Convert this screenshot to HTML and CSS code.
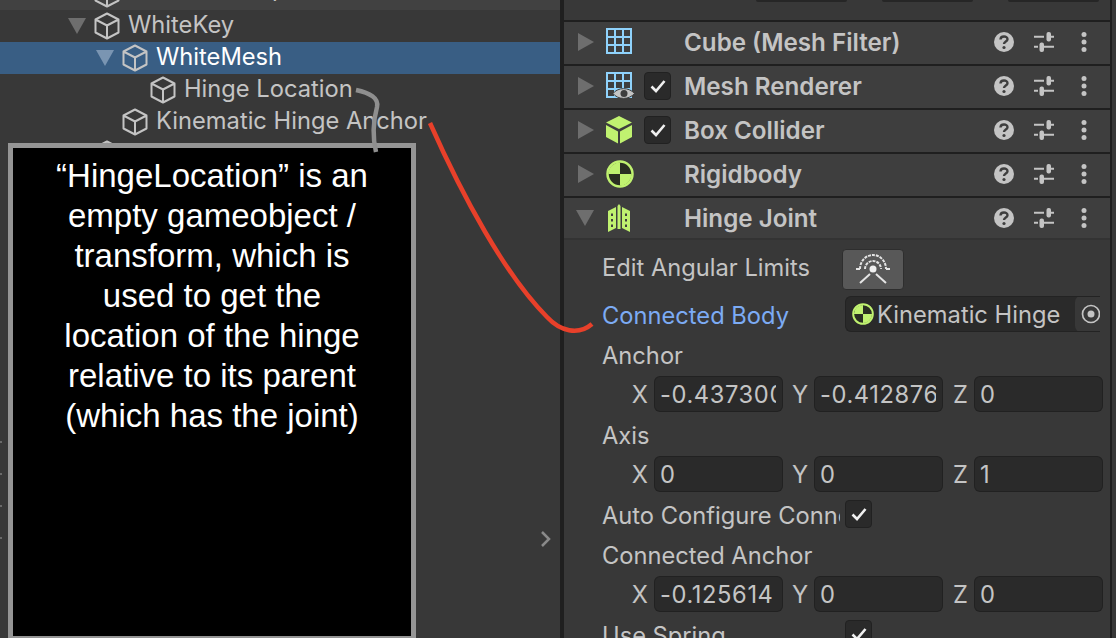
FILE: index.html
```html
<!DOCTYPE html>
<html lang="en">
  <head>
    <meta charset="UTF-8" />
    <title>Hinge Joint Inspector</title>
    <link rel="stylesheet" href="styles.css">
  </head>
  <body>
    <svg class="defs" width="0" height="0">
      <symbol id="cube" viewBox="0 0 26 28">
        <path d="M13 1.500 24.500 7.500V20.500L13 26.500 1.500 20.500V7.500ZM1.500 7.500 13 13.500 24.500 7.500M13 13.500V26.500" fill="none" stroke="currentColor" stroke-width="2" stroke-linejoin="round" />
      </symbol>
      <symbol id="grid" viewBox="0 0 26 26">
        <path d="M1 1H25V25H1ZM9 1V25M17 1V25M1 9H25M1 17H25" fill="none" stroke="#8fd2fb" stroke-width="2" />
      </symbol>
      <symbol id="help" viewBox="0 0 20 20">
        <circle cx="10" cy="10" r="10" fill="#c4c4c4" />
        <path d="M6.500 7.500C6.500 3.500 13.500 3.500 13.500 7.200 13.500 9.500 10 9.500 10 12" fill="none" stroke="#3e3e3e" stroke-width="2.400" />
        <circle cx="10" cy="15.500" r="1.600" fill="#3e3e3e" />
      </symbol>
      <symbol id="sliders" viewBox="0 0 20 20">
        <path d="M0 4.700H10M16 4.700H20M0 14.700H4M10 14.700H20" stroke="#c4c4c4" stroke-width="2" />
        <rect x="12.500" y="0" width="4.500" height="9.500" rx="2" fill="#c4c4c4" />
        <rect x="5.500" y="10.500" width="4.500" height="9.500" rx="2" fill="#c4c4c4" />
      </symbol>
      <symbol id="dots" viewBox="0 0 6 20">
        <circle cx="3" cy="2.500" r="2.500" fill="#c4c4c4" />
        <circle cx="3" cy="10" r="2.500" fill="#c4c4c4" />
        <circle cx="3" cy="17.500" r="2.500" fill="#c4c4c4" />
      </symbol>
      <symbol id="check" viewBox="0 0 16 14">
        <path d="M1.500 7.500 6 12 14.500 2" fill="none" stroke="#f0f0f0" stroke-width="2.600" />
      </symbol>
      <symbol id="rigidbody" viewBox="0 0 28 28">
        <circle cx="14" cy="14" r="12.500" fill="#2a2f22" stroke="#c0f270" stroke-width="2.500" />
        <path d="M14 2.500V14H2.500A11.500 11.500 0 0 1 14 2.500ZM14 14H25.500A11.500 11.500 0 0 1 14 25.500Z" fill="#c0f270" />
      </symbol>
      <symbol id="tri-right" viewBox="0 0 16 18">
        <path d="M0 0 16 9 0 18Z" fill="#6e6e6e" />
      </symbol>
      <symbol id="tri-down" viewBox="0 0 18 16">
        <path d="M0 0H18L9 16Z" fill="currentColor" />
      </symbol>
    </svg>

    <div class="app">
      <section class="hierarchy">
        <div class="row row-cut depth-1">
          <span class="arrow-slot"></span>
          <svg class="cube"><use href="#cube" /></svg>
          <span class="row-name">PinNer (Bass)</span>
        </div>
        <div class="row depth-1">
          <svg class="arrow-slot tri"><use href="#tri-down" /></svg>
          <svg class="cube"><use href="#cube" /></svg>
          <span class="row-name">WhiteKey</span>
        </div>
        <div class="row row-selected depth-2">
          <svg class="arrow-slot tri"><use href="#tri-down" /></svg>
          <svg class="cube"><use href="#cube" /></svg>
          <span class="row-name">WhiteMesh</span>
        </div>
        <div class="row depth-3">
          <span class="arrow-slot"></span>
          <svg class="cube"><use href="#cube" /></svg>
          <span class="row-name">Hinge Location</span>
        </div>
        <div class="row depth-2">
          <span class="arrow-slot"></span>
          <svg class="cube"><use href="#cube" /></svg>
          <span class="row-name">Kinematic Hinge Anchor</span>
        </div>
        <div class="row depth-1">
          <span class="arrow-slot"></span>
          <svg class="cube"><use href="#cube" /></svg>
        </div>
        <svg class="collapse" width="12" height="18" viewBox="0 0 12 18">
          <path d="M2 2 9 9 2 16" fill="none" stroke="#8a8a8a" stroke-width="2.500" />
        </svg>
        <div class="edge-ticks">
          <span class="edge-tick"></span>
          <span class="edge-tick"></span>
          <span class="edge-tick"></span>
          <span class="edge-tick"></span>
        </div>
      </section>

      <section class="inspector">
        <div class="top-fields">
          <span class="top-field"></span>
          <span class="top-field"></span>
          <span class="top-field"></span>
        </div>

        <div class="comp">
          <svg class="comp-arrow"><use href="#tri-right" /></svg>
          <svg class="comp-icon"><use href="#grid" width="26" height="26" /></svg>
          <span class="comp-toggle"></span>
          <span class="comp-title">Cube (Mesh Filter)</span>
          <svg class="tool-help"><use href="#help" /></svg>
          <svg class="tool-sliders"><use href="#sliders" /></svg>
          <svg class="tool-dots"><use href="#dots" /></svg>
        </div>
        <div class="comp">
          <svg class="comp-arrow"><use href="#tri-right" /></svg>
          <svg class="comp-icon" viewBox="0 0 26 28">
            <use href="#grid" width="26" height="26" />
            <path d="M7 21.500C12 15 23 15 28.500 21.500 23 28 12 28 7 21.500Z" fill="#c4c4c4" stroke="#3e3e3e" stroke-width="1" />
            <circle cx="18" cy="21.500" r="3.500" fill="#3e3e3e" />
          </svg>
          <span class="comp-toggle"><span class="checkbox"><svg class="check"><use href="#check" /></svg></span></span>
          <span class="comp-title">Mesh Renderer</span>
          <svg class="tool-help"><use href="#help" /></svg>
          <svg class="tool-sliders"><use href="#sliders" /></svg>
          <svg class="tool-dots"><use href="#dots" /></svg>
        </div>
        <div class="comp">
          <svg class="comp-arrow"><use href="#tri-right" /></svg>
          <svg class="comp-icon" viewBox="0 0 26 28">
            <path d="M13 0 26 6.500 13 13 0 6.500Z M0 9V21L12 27.500V15.500Z M26 9V21L14 27.500V15.500Z" fill="#c0f270" />
          </svg>
          <span class="comp-toggle"><span class="checkbox"><svg class="check"><use href="#check" /></svg></span></span>
          <span class="comp-title">Box Collider</span>
          <svg class="tool-help"><use href="#help" /></svg>
          <svg class="tool-sliders"><use href="#sliders" /></svg>
          <svg class="tool-dots"><use href="#dots" /></svg>
        </div>
        <div class="comp">
          <svg class="comp-arrow"><use href="#tri-right" /></svg>
          <svg class="comp-icon"><use href="#rigidbody" width="28" height="28" /></svg>
          <span class="comp-toggle"></span>
          <span class="comp-title">Rigidbody</span>
          <svg class="tool-help"><use href="#help" /></svg>
          <svg class="tool-sliders"><use href="#sliders" /></svg>
          <svg class="tool-dots"><use href="#dots" /></svg>
        </div>
        <div class="comp comp-open">
          <svg class="comp-arrow-down"><use href="#tri-down" /></svg>
          <svg class="comp-icon" viewBox="0 0 26 28">
            <path fill-rule="evenodd" d="M2 7 10 3V24L2 28ZM5 9.500V12H7V9.500ZM5 15V17.500H7V15ZM5 20.500V23H7V20.500Z" fill="#c0f270" />
            <path d="M11.500 2 13 0 14.500 2V25H11.500Z" fill="#c0f270" />
            <path fill-rule="evenodd" d="M24 7 16 3V24L24 28ZM19 9.500V12H21V9.500ZM19 15V17.500H21V15ZM19 20.500V23H21V20.500Z" fill="#c0f270" />
          </svg>
          <span class="comp-toggle"></span>
          <span class="comp-title">Hinge Joint</span>
          <svg class="tool-help"><use href="#help" /></svg>
          <svg class="tool-sliders"><use href="#sliders" /></svg>
          <svg class="tool-dots"><use href="#dots" /></svg>
        </div>

        <div class="props">
          <div class="prop prop-tall">
            <span class="prop-label">Edit Angular Limits</span>
            <button class="edit-btn" type="button">
              <svg width="34" height="30" viewBox="0 0 34 30">
                <path d="M4 15A13 14 0 0 1 30 15M9 15A8 8 0 0 1 25 15" fill="none" stroke="#e4e4e4" stroke-width="2" stroke-dasharray="3 1" />
                <circle cx="17" cy="15" r="3.500" fill="#f0f0f0" />
                <path d="M14 20 4 29M20 20 30 29M0 15H4M30 15H34" stroke="#e4e4e4" stroke-width="2" />
              </svg>
            </button>
          </div>
          <div class="prop">
            <span class="prop-label prop-link">Connected Body</span>
            <div class="object-field">
              <svg class="object-icon"><use href="#rigidbody" /></svg>
              <span class="object-name">Kinematic Hinge</span>
              <span class="object-pick">
                <svg width="20" height="20" viewBox="0 0 20 20">
                  <circle cx="10" cy="10" r="8.500" fill="none" stroke="#c4c4c4" stroke-width="1.700" />
                  <circle cx="10" cy="10" r="3.500" fill="#c4c4c4" />
                </svg>
              </span>
            </div>
          </div>
          <div class="prop"><span class="prop-label">Anchor</span></div>
          <div class="prop vec">
            <label class="axis">X<span class="num">-0.437300</span></label>
            <label class="axis">Y<span class="num">-0.412876</span></label>
            <label class="axis">Z<span class="num">0</span></label>
          </div>
          <div class="prop"><span class="prop-label">Axis</span></div>
          <div class="prop vec">
            <label class="axis">X<span class="num">0</span></label>
            <label class="axis">Y<span class="num">0</span></label>
            <label class="axis">Z<span class="num">1</span></label>
          </div>
          <div class="prop">
            <span class="prop-label prop-clip">Auto Configure Connected Anchor</span>
            <span class="checkbox"><svg class="check"><use href="#check" /></svg></span>
          </div>
          <div class="prop"><span class="prop-label">Connected Anchor</span></div>
          <div class="prop vec">
            <label class="axis">X<span class="num">-0.125614</span></label>
            <label class="axis">Y<span class="num">0</span></label>
            <label class="axis">Z<span class="num">0</span></label>
          </div>
          <div class="prop">
            <span class="prop-label prop-clip">Use Spring</span>
            <span class="checkbox"><svg class="check"><use href="#check" /></svg></span>
          </div>
        </div>
      </section>
      <div class="right-edge"></div>
    </div>

    <!-- annotations drawn over the screenshot -->
    <div class="note">
      “HingeLocation” is an<br>
      empty gameobject /<br>
      transform, which is<br>
      used to get the<br>
      location of the hinge<br>
      relative to its parent<br>
      (which has the joint)
    </div>
    <svg class="marks" width="1116" height="638" viewBox="0 0 1116 638">
      <path d="M356 90C370 93 379 98 377 107 373 122 372 135 376 152" fill="none" stroke="#8f8f8f" stroke-width="4.500" />
      <path d="M430 123C462 195 505 275 547 317 560 331 578 336 592 324" fill="none" stroke="#e8402a" stroke-width="4.500" />
    </svg>
  </body>
</html>
```

FILE: styles.css
```css
* {
  box-sizing: border-box;
}
html,
body {
  margin: 0;
  height: 100%;
  overflow: hidden;
}
body {
  font-family: Inter, "Liberation Sans", sans-serif;
  font-size: 23.7px;
  color: #c4c4c4;
  background: #383838;
}
.defs {
  position: absolute;
}
.app {
  display: flex;
  height: 638px;
}

/* hierarchy */
.hierarchy {
  position: relative;
  width: 560px;
  flex-shrink: 0;
}
.row {
  display: flex;
  align-items: center;
  height: 32px;
  overflow: hidden;
}
.row-cut {
  height: 10px;
  align-items: flex-end;
  background: #414141;
}
.row-cut .cube {
  margin-bottom: 2px;
}
.row-cut .row-name {
  line-height: 32px;
  flex-shrink: 0;
}
.row-selected {
  background: #395e84;
  color: #fff;
}
.depth-1 {
  padding-left: 68px;
}
.depth-2 {
  padding-left: 96px;
}
.depth-3 {
  padding-left: 124px;
}
.arrow-slot {
  width: 18px;
  height: 16px;
  margin-right: 8px;
  flex-shrink: 0;
}
.tri {
  color: #6e6e6e;
}
.row-selected .tri {
  color: #7a95b2;
}
.cube {
  width: 26px;
  height: 28px;
  margin-right: 8px;
  flex-shrink: 0;
  color: #c4c4c4;
}
.row-name {
  white-space: nowrap;
  padding-bottom: 4px;
}
.collapse {
  position: absolute;
  left: 540px;
  top: 530px;
}
.edge-ticks {
  position: absolute;
  left: 0;
  top: 441px;
  display: flex;
  flex-direction: column;
  gap: 30px;
}
.edge-tick {
  width: 2px;
  height: 2px;
  background: #6a6a6a;
}

/* inspector */
.inspector {
  width: 550px;
  flex-shrink: 0;
  border-left: 4px solid #1f1f1f;
  overflow: hidden;
}
.right-edge {
  width: 2px;
  background: #1f1f1f;
  flex-shrink: 0;
}
.top-fields {
  display: flex;
  gap: 35px;
  height: 20px;
  padding-left: 192px;
}
.top-field {
  width: 91px;
  height: 2px;
  background: #262626;
  border-radius: 0 0 3px 3px;
}
.comp {
  display: flex;
  align-items: center;
  height: 44px;
  border-top: 2px solid #1f1f1f;
  background: #3e3e3e;
  padding-left: 14px;
  padding-bottom: 2px;
}
.comp-open {
  border-bottom: 2px solid #333;
  padding-bottom: 0;
}
.comp-arrow {
  width: 16px;
  height: 18px;
  margin-right: 12px;
  flex-shrink: 0;
}
.comp-arrow-down {
  width: 18px;
  height: 16px;
  margin-left: -2px;
  margin-right: 12px;
  flex-shrink: 0;
  color: #6e6e6e;
}
.comp-icon {
  width: 26px;
  height: 28px;
  margin-right: 12px;
  flex-shrink: 0;
  overflow: visible;
}
.comp-toggle {
  display: flex;
  width: 40px;
  flex-shrink: 0;
}
.comp-title {
  font-size: 24.2px;
  font-weight: 600;
  width: 310px;
  flex-shrink: 0;
  white-space: nowrap;
}
.tool-help {
  width: 20px;
  height: 20px;
  margin-right: 20px;
  flex-shrink: 0;
}
.tool-sliders {
  width: 20px;
  height: 20px;
  margin-right: 27px;
  flex-shrink: 0;
}
.tool-dots {
  width: 6px;
  height: 20px;
  flex-shrink: 0;
}
.checkbox {
  display: flex;
  align-items: center;
  justify-content: center;
  width: 27px;
  height: 28px;
  background: #2a2a2a;
  border: 1px solid #212121;
  border-radius: 4px;
  flex-shrink: 0;
}
.check {
  width: 16px;
  height: 14px;
}

/* properties */
.props {
  padding-left: 38px;
  padding-top: 6px;
}
.prop {
  display: flex;
  align-items: center;
  height: 40px;
}
.prop-tall {
  height: 48px;
  padding-bottom: 8px;
}
.prop-label {
  width: 243px;
  flex-shrink: 0;
  white-space: nowrap;
  padding-top: 2px;
}
.prop-clip {
  width: 238px;
  margin-right: 5px;
  overflow: hidden;
}
.prop-link {
  color: #7cabf4;
}
.edit-btn {
  display: flex;
  align-items: center;
  justify-content: center;
  width: 62px;
  height: 41px;
  margin: 6px 0 0 -3px;
  padding: 0;
  background: #585858;
  border: 1px solid #2e2e2e;
  border-radius: 4px;
}
.object-field {
  display: flex;
  align-items: center;
  width: 255px;
  height: 36px;
  background: #2a2a2a;
  border: 1px solid #232323;
  border-right: none;
  border-radius: 6px 0 0 6px;
  padding-left: 6px;
  overflow: hidden;
}
.object-icon {
  width: 22px;
  height: 22px;
  flex-shrink: 0;
  margin-right: 3px;
}
.object-name {
  width: 198px;
  flex-shrink: 0;
  white-space: nowrap;
}
.object-pick {
  display: flex;
  align-items: center;
  justify-content: flex-end;
  width: 26px;
  height: 36px;
  flex-shrink: 0;
  background: #383838;
  border-radius: 6px 0 0 6px;
}
.vec {
  padding-left: 21px;
}
.axis {
  display: flex;
  align-items: center;
  justify-content: flex-end;
  gap: 6px;
  width: 160px;
}
/* the thick right border keeps long values clipped short of the field edge */
.axis .num {
  display: block;
  width: 127px;
  height: 34px;
  margin: 0 1px 0 1px;
  line-height: 35px;
  background: #2a2a2a;
  border-right: 6px solid #2a2a2a;
  box-shadow: 0 0 0 1px #212121;
  border-radius: 5px;
  padding-left: 5px;
  letter-spacing: 0.6px;
  white-space: nowrap;
  overflow: hidden;
}

/* annotations */
.note {
  position: absolute;
  left: 8px;
  top: 143px;
  width: 408px;
  height: 498px;
  background: #000;
  border: 5px solid #959595;
  color: #fff;
  font-family: "Liberation Sans", Arial, sans-serif;
  font-size: 33px;
  line-height: 40px;
  text-align: center;
  padding-top: 8px;
}
.marks {
  position: absolute;
  left: 0;
  top: 0;
  pointer-events: none;
}
```
